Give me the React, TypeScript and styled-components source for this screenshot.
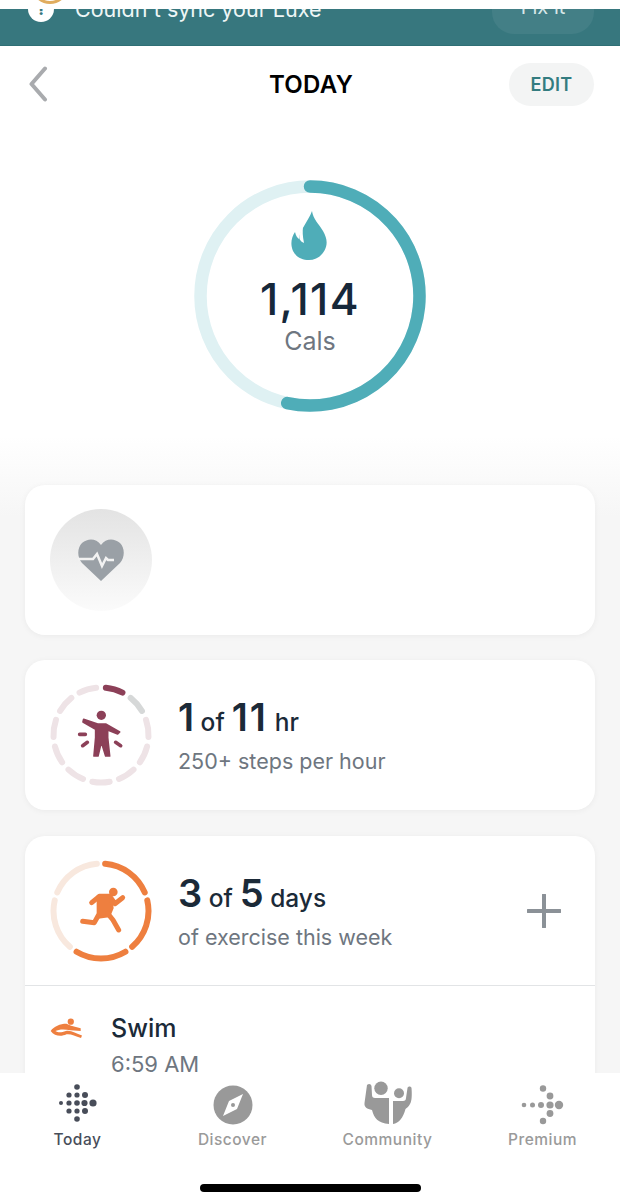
import React from "react";
import styled, { createGlobalStyle } from "styled-components";

const Global = createGlobalStyle`
  html, body { margin: 0; padding: 0; background: #fff; }
  * { box-sizing: border-box; }
  body { font-family: Inter, "Liberation Sans", sans-serif; }
`;

const Screen = styled.div`
  width: 620px; height: 1200px; display: flex; flex-direction: column; overflow: hidden; background: #fff;
`;
const TopStrip = styled.div`
  height: 9px; flex: none; background: #fff; overflow: hidden; position: relative; z-index: 2;
  display: flex; padding-left: 31px;
`;
const SyncRing = styled.div`
  width: 38px; height: 38px; flex: none; margin-top: -34px; border-radius: 50%; border: 3px solid #e0ac5e;
`;
const Banner = styled.div`
  height: 37px; flex: none; background: #37777e; border-bottom: 1px solid #2f6f75; overflow: hidden;
`;
const BannerRow = styled.div`
  height: 50px; margin-top: -25px; padding: 0 26px 0 28px; display: flex; align-items: center; color: #eef6f6;
  font-size: 21.5px;
`;
const Alert = styled.div`
  width: 26px; height: 26px; flex: none; border-radius: 50%; background: #fff; color: #37777e; font-size: 16px;
  font-weight: 800; display: flex; align-items: center; justify-content: center; margin-right: 21px;
`;
const BannerText = styled.span`flex: 1; white-space: nowrap;`;
const FixButton = styled.div`
  width: 102px; height: 50px; padding-bottom: 5px; border-radius: 22px; background: #437f86; display: flex; align-items: center;
  justify-content: center; font-size: 20px; color: #d7e7e8;
`;
const Main = styled.main`
  flex: 1; min-height: 0; overflow: hidden;
  background: linear-gradient(to bottom, #fff 390px, #f6f6f6 470px);
`;
const Header = styled.header`
  height: 76px; padding: 0 26px 0 28px; display: grid; grid-template-columns: 1fr auto 1fr; align-items: center;
`;
const Title = styled.h1`
  margin: 0; font-size: 24px; font-weight: 600; color: #000; letter-spacing: 0.3px;
`;
const EditButton = styled.button`
  justify-self: end; width: 85px; height: 43px; border: 0; border-radius: 22px; background: #f3f4f4; color: #337c80;
  font: 600 18px Inter, sans-serif; letter-spacing: 0.3px;
`;
const Hero = styled.section`
  height: 363px; padding-top: 58px; display: flex; justify-content: center; align-items: flex-start;
`;
const RingWrap = styled.div`width: 232px; height: 232px; position: relative;`;
const RingCenter = styled.div`
  position: absolute; inset: 0; display: flex; flex-direction: column; align-items: center;
`;
const Flame = styled.svg`margin-top: 31px; margin-left: -3px;`;
const Amount = styled.div`
  margin-top: 14px; font-size: 44px; line-height: 50px; font-weight: 500; color: #16283a; letter-spacing: 1.4px;
`;
const Unit = styled.div`font-size: 25px; line-height: 30px; color: #6e7680; margin-top: 2px;`;
const Cards = styled.div`display: flex; flex-direction: column; gap: 25px; padding: 0 25px;`;
const Card = styled.article`
  background: #fff; border-radius: 20px; box-shadow: 0 1px 6px rgba(0,0,0,0.05);
`;
const ExerciseCard = styled(Card)`margin-top: 1px;`;
const CardRow = styled.div`
  height: 150px; padding: 0 34px 0 25px; display: flex; align-items: center; gap: 26px;
`;
const HeartDisc = styled.div`
  width: 102px; height: 102px; border-radius: 50%; display: flex; align-items: center; justify-content: center;
  background: linear-gradient(to bottom, #e3e3e3, #fbfbfb);
`;
const Stats = styled.div`flex: 1; display: flex; flex-direction: column; gap: 5px; margin-top: 2px;`;
const StatLine = styled.div`
  display: flex; align-items: baseline; gap: 7px; font-size: 24.5px; line-height: 40px; font-weight: 500; color: #1b2a38;
`;
const Big = styled.span<{ $ones?: boolean }>`
  font-size: 38px; font-weight: 600; letter-spacing: ${(p) => (p.$ones ? "2px" : "-0.5px")};
`;
const StatSub = styled.div`font-size: 21.5px; line-height: 28px; color: #6e7680;`;
const Divider = styled.div`height: 1px; background: #e2e4e6; margin-top: -1px;`;
const ActivityRow = styled.div`
  padding: 24px 25px 40px; display: flex; align-items: flex-start; gap: 28px;
`;
const ActivityIcon = styled.svg`margin-top: 7px; flex: none;`;
const ActivityName = styled.div`font-size: 25px; line-height: 36px; font-weight: 500; color: #1b2a38;`;
const ActivityTime = styled.div`font-size: 22px; line-height: 36px; color: #6e7680;`;
const TabBar = styled.nav`
  height: 127px; flex: none; background: #fff; display: flex; flex-direction: column; align-items: center;
`;
const Tabs = styled.div`
  width: 100%; height: 111px; padding-top: 11px; display: grid; grid-template-columns: repeat(4, 1fr);
  justify-items: center;
`;
const Tab = styled.div<{ $active?: boolean }>`
  display: flex; flex-direction: column; align-items: center; width: 155px;
  color: ${(p) => (p.$active ? "#484d59" : "#9a9a9a")}; font-size: 15.5px; line-height: 20px; letter-spacing: 0.5px; font-weight: 500;
`;
const TabIcon = styled.svg`display: block; margin-bottom: 4px; overflow: visible;`;
const HomeBar = styled.div`width: 221px; height: 8px; border-radius: 4px; background: #000;`;

const polar = (r: number, deg: number) => {
  const a = (deg * Math.PI) / 180;
  return [r * Math.sin(a), -r * Math.cos(a)];
};
const arc = (r: number, from: number, to: number) => {
  const [x1, y1] = polar(r, from);
  const [x2, y2] = polar(r, to);
  return `M${x1.toFixed(2)} ${y1.toFixed(2)}A${r} ${r} 0 ${to - from > 180 ? 1 : 0} 1 ${x2.toFixed(2)} ${y2.toFixed(2)}`;
};

const Dots = ({ dots, fill }: { dots: number[][]; fill: string }) => (
  <g fill={fill}>{dots.map(([x, y, r], i) => <circle key={i} cx={x} cy={y} r={r} />)}</g>
);

const moveColors = (i: number) => (i === 0 ? "#8c4058" : i === 1 ? "#d6d8d8" : "#eee3e6");
const MoveRing = () => (
  <svg width="102" height="102" viewBox="-51 -51 102 102">
    <g fill="none" strokeWidth="6" strokeLinecap="round">
      {Array.from({ length: 11 }).map((_, i) => {
        const c = 16.36 + (360 / 11) * i;
        return <path key={i} d={arc(47.5, c - 10.5, c + 10.5)} stroke={moveColors(i)} />;
      })}
    </g>
    <g transform="translate(-70.67 -65.67) scale(0.3333)">
      <circle cx="213" cy="138" r="14" fill="#8c4058" />
      <path d="M160 150L202 164H226L268 188L262 194L232 182V205L238 260H226L213 218L203 260H191L196 205V180L158 158Z" fill="#8c4058" stroke="#8c4058" strokeWidth="5" strokeLinejoin="round" />
      <path d="M148 195H165M157 229L171 219M256 219L271 229" stroke="#8c4058" strokeWidth="11" strokeLinecap="round" fill="none" />
    </g>
  </svg>
);
const RunRing = () => (
  <svg width="102" height="102" viewBox="-51 -51 102 102">
    <g fill="none" strokeWidth="6" strokeLinecap="round">
      {[0, 1, 2, 3, 4].map((i) => (
        <path key={i} d={arc(47.5, 72 * i + 5, 72 * i + 67)} stroke={i < 3 ? "#ee7f3f" : "#f8e8de"} />
      ))}
    </g>
    <g transform="translate(-70.67 -65.67) scale(0.3333)">
      <circle cx="249" cy="140" r="13" fill="#ee7f3f" />
      <path d="M184 172L207 153H238L254 175L277 157" fill="none" stroke="#ee7f3f" strokeWidth="15" strokeLinecap="round" strokeLinejoin="round" />
      <path d="M203 152L240 155L246 188L236 212L203 216Z" fill="#ee7f3f" stroke="#ee7f3f" strokeWidth="8" strokeLinejoin="round" />
      <path d="M232 204L248 224L265 254M203 212L192 232L157 228" fill="none" stroke="#ee7f3f" strokeWidth="15" strokeLinecap="round" strokeLinejoin="round" />
    </g>
  </svg>
);

export default function App() {
  return (
    <Screen>
      <Global />
      <TopStrip><SyncRing /></TopStrip>
      <Banner>
        <BannerRow>
          <Alert>!</Alert>
          <BannerText>Couldn't sync your Luxe</BannerText>
          <FixButton>Fix it</FixButton>
        </BannerRow>
      </Banner>
      <Main>
        <Header>
          <svg width="20" height="36" viewBox="0 0 20 36">
            <path d="M17 2.500L3.500 18L17 33.500" fill="none" stroke="#a9abae" strokeWidth="4" strokeLinecap="round" strokeLinejoin="round" />
          </svg>
          <Title>TODAY</Title>
          <EditButton>EDIT</EditButton>
        </Header>
        <Hero>
          <RingWrap>
            <svg width="232" height="232" viewBox="-116 -116 232 232">
              <circle r="109.500" fill="none" stroke="#dff1f3" strokeWidth="12.500" />
              <path d={arc(109.5, 0, 192)} fill="none" stroke="#4fadb8" strokeWidth="12.500" strokeLinecap="round" />
            </svg>
            <RingCenter>
              <Flame width="36" height="49" viewBox="0 0 36 49">
                <path fill="#4fadb8" d="M21 0C22 8 28 13 32 20C36 27 37 33 33.500 39.500C30 46 24 49 18 49C11 49 5 46 2 40C-1 33 0.500 26 4 21C5 25 6.500 27 8 28C9 18 17 11 21 0Z" />
                <path fill="#fff" d="M8.500 28C8 22 10 19 12 16C11.500 20 11.500 25 13 32C11 31 9.500 30 8.500 28Z" />
              </Flame>
              <Amount>1,114</Amount>
              <Unit>Cals</Unit>
            </RingCenter>
          </RingWrap>
        </Hero>
        <Cards>
          <Card>
            <CardRow>
              <HeartDisc>
                <svg width="46" height="42" viewBox="0 0 46 42">
                  <path fill="#9aa0a6" d="M23 42L4 24C-1 18 -1 9 4 4C10 -1 18 -1 23 6C28 -1 36 -1 42 4C47 9 47 18 42 24Z" />
                  <path fill="none" stroke="#f2f2f2" strokeWidth="2.500" d="M0 20H15L19 15L24 27L28 19L30 21H36" />
                </svg>
              </HeartDisc>
            </CardRow>
          </Card>
          <Card>
            <CardRow>
              <MoveRing />
              <Stats>
                <StatLine><Big>1</Big>of<Big $ones>11</Big>hr</StatLine>
                <StatSub>250+ steps per hour</StatSub>
              </Stats>
            </CardRow>
          </Card>
          <ExerciseCard>
            <CardRow>
              <RunRing />
              <Stats>
                <StatLine><Big>3</Big>of<Big>5</Big>days</StatLine>
                <StatSub>of exercise this week</StatSub>
              </Stats>
              <svg width="34" height="34" viewBox="0 0 34 34">
                <path d="M17 1V33M1 17H33" stroke="#8b9197" strokeWidth="4" strokeLinecap="round" />
              </svg>
            </CardRow>
            <Divider />
            <ActivityRow>
              <ActivityIcon width="33" height="22" viewBox="150 50 100 66">
                <circle cx="213" cy="64" r="9.500" fill="#ee7f3f" />
                <path fill="#ee7f3f" d="M152 92C162 78 180 70 200 70L214 76L243 84V92L212 90C195 86 178 86 166 92C175 98 185 97 198 92C212 88 228 98 247 106L244 113C226 107 212 100 200 102C184 110 164 108 152 92Z" />
              </ActivityIcon>
              <div>
                <ActivityName>Swim</ActivityName>
                <ActivityTime>6:59 AM</ActivityTime>
              </div>
            </ActivityRow>
          </ExerciseCard>
        </Cards>
      </Main>
      <TabBar>
        <Tabs>
          <Tab $active>
            <TabIcon width="40" height="42" viewBox="57 84 40 42">
              <Dots fill="#484d59" dots={[
                [76,87,2.800],[68,95,2.600],[76,95,2.600],[84,95,3],
                [60,103,2],[68,103,2.600],[76,103,2.800],[83.500,103,3.100],[92,103,3.600],
                [68,111,2.600],[76,111,2.600],[84,111,3],[76,119,2.800],
              ]} />
            </TabIcon>
            Today
          </Tab>
          <Tab>
            <TabIcon width="40" height="42" viewBox="0 0 40 42">
              <circle cx="20" cy="21" r="19.500" fill="#999" />
              <path d="M30 10L24 25L10 32L16 17Z" fill="#fff" />
              <circle cx="20" cy="21" r="2" fill="#999" />
            </TabIcon>
            Discover
          </Tab>
          <Tab>
            <TabIcon width="50" height="42" viewBox="0 0 50 42">
              <g fill="#999">
                <circle cx="18" cy="4.300" r="6.700" />
                <circle cx="36" cy="9.300" r="5" />
                <path d="M4 1C6 -1 8 0 8.500 2L9 11C9 13 10 14 12 14H26V40C15 39 11 34 9 26C4 25 1 23 1.500 19Z" />
                <path d="M30 17H40C42 17 43 16 43 14L44.500 4C45 2 48 2 48.500 4C49 10 49 17 47 20C46 22 44 24 42.500 25C40 34 36 39 30 40Z" />
              </g>
            </TabIcon>
            Community
          </Tab>
          <Tab>
            <TabIcon width="44" height="42" viewBox="521 1082 44 42">
              <Dots fill="#999" dots={[
                [543,1086.500,3.200],[550,1094,3.400],
                [524,1103,2.300],[532.500,1103,2.500],[541,1103,3],[550,1103,3.600],[559,1103,4.200],
                [550,1111.500,3.400],[543,1119,3.200],
              ]} />
            </TabIcon>
            Premium
          </Tab>
        </Tabs>
        <HomeBar />
      </TabBar>
    </Screen>
  );
}
